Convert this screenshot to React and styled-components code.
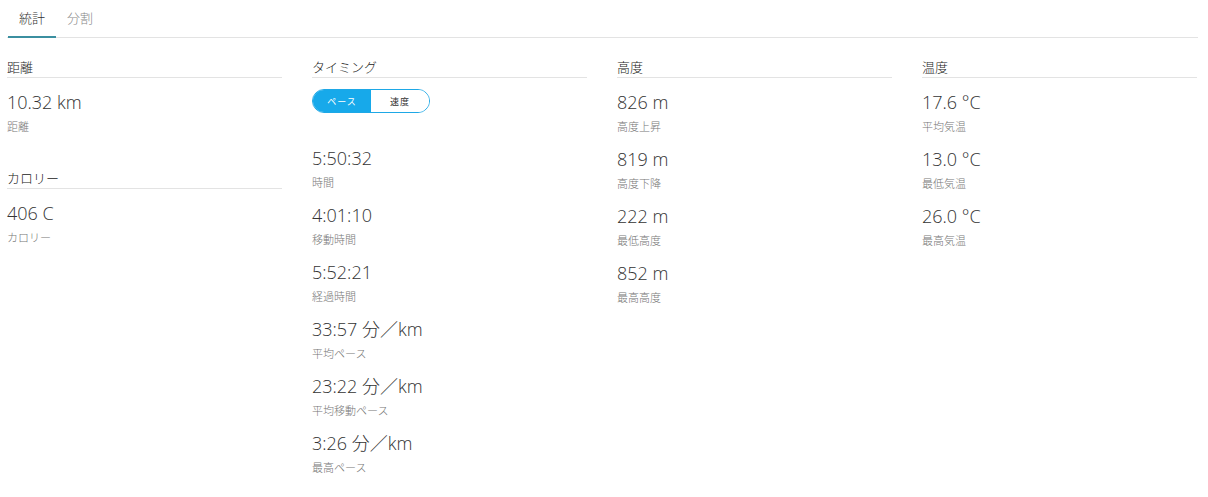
import React, { useState } from 'react';
import styled, { createGlobalStyle } from 'styled-components';

const GlobalStyle = createGlobalStyle`
  body {
    margin: 0;
    background: #fff;
    font-family: "Open Sans", "Noto Sans CJK JP", sans-serif;
    color: #333;
  }
`;

const Page = styled.div`
  padding: 0 10px 0 7px;
  width: 1191px;
`;

const TabBar = styled.div`
  display: flex;
  border-bottom: 1px solid #e3e3e3;
  height: 38px;
  box-sizing: border-box;
`;

const Tab = styled.div`
  padding: 8px 11px 0;
  box-sizing: border-box;
  font-size: 13px;
  font-weight: 300;
  color: ${(p) => (p.$active ? '#333' : '#888')};
  border-bottom: 2px solid ${(p) => (p.$active ? '#3b8fa0' : 'transparent')};
  margin-left: ${(p) => (p.$first ? '1px' : '0')};
  margin-bottom: -1px;
  height: 38px;
`;

const Grid = styled.div`
  display: grid;
  grid-template-columns: repeat(4, 275px);
  column-gap: 30px;
  padding-top: 20px;
`;

const Column = styled.div`
  display: flex;
  flex-direction: column;
`;

const Section = styled.div`
  margin-bottom: 22px;
`;

const Header = styled.div`
  font-size: 13px;
  font-weight: 300;
  color: #222;
  line-height: 18px;
  padding-bottom: 1px;
  border-bottom: 1px solid #e3e3e3;
  margin-bottom: 12px;
`;

const Stat = styled.div`
  height: 57px;
`;

const Value = styled.div`
  font-size: 18px;
  font-weight: 300;
  line-height: 24px;
  color: #333;
`;

const Label = styled.div`
  font-size: 11px;
  font-weight: 300;
  line-height: 16px;
  color: #777;
  margin-top: 5px;
`;

const Toggle = styled.div`
  display: flex;
  width: 118px;
  height: 24px;
  margin: -1px 0 33px;
  border: 1px solid #1ea8e6;
  border-radius: 12px;
  overflow: hidden;
  box-sizing: border-box;
`;

const ToggleButton = styled.button`
  flex: 1;
  border: none;
  padding: 0;
  font-family: inherit;
  font-size: 9px;
  letter-spacing: 1px;
  background: ${(p) => (p.$on ? '#17a9ea' : '#fff')};
  color: ${(p) => (p.$on ? '#fff' : '#333')};
  cursor: pointer;
`;

const data = [
  [
    { title: '距離', stats: [['10.32 km', '距離']] },
    { title: 'カロリー', stats: [['406 C', 'カロリー']] },
  ],
  [
    {
      title: 'タイミング',
      toggle: true,
      stats: [
        ['5:50:32', '時間'],
        ['4:01:10', '移動時間'],
        ['5:52:21', '経過時間'],
        ['33:57 分／km', '平均ペース'],
        ['23:22 分／km', '平均移動ペース'],
        ['3:26 分／km', '最高ペース'],
      ],
    },
  ],
  [
    {
      title: '高度',
      stats: [
        ['826 m', '高度上昇'],
        ['819 m', '高度下降'],
        ['222 m', '最低高度'],
        ['852 m', '最高高度'],
      ],
    },
  ],
  [
    {
      title: '温度',
      stats: [
        ['17.6 °C', '平均気温'],
        ['13.0 °C', '最低気温'],
        ['26.0 °C', '最高気温'],
      ],
    },
  ],
];

const App = () => {
  const [mode, setMode] = useState('pace');

  return (
    <Page>
      <GlobalStyle />
      <TabBar>
        <Tab $active $first>統計</Tab>
        <Tab>分割</Tab>
      </TabBar>
      <Grid>
        {data.map((col, i) => (
          <Column key={i}>
            {col.map((sec) => (
              <Section key={sec.title}>
                <Header>{sec.title}</Header>
                {sec.toggle && (
                  <Toggle>
                    <ToggleButton $on={mode === 'pace'} onClick={() => setMode('pace')}>
                      ペース
                    </ToggleButton>
                    <ToggleButton $on={mode === 'speed'} onClick={() => setMode('speed')}>
                      速度
                    </ToggleButton>
                  </Toggle>
                )}
                {sec.stats.map(([v, l]) => (
                  <Stat key={l}>
                    <Value>{v}</Value>
                    <Label>{l}</Label>
                  </Stat>
                ))}
              </Section>
            ))}
          </Column>
        ))}
      </Grid>
    </Page>
  );
};

export default App;
